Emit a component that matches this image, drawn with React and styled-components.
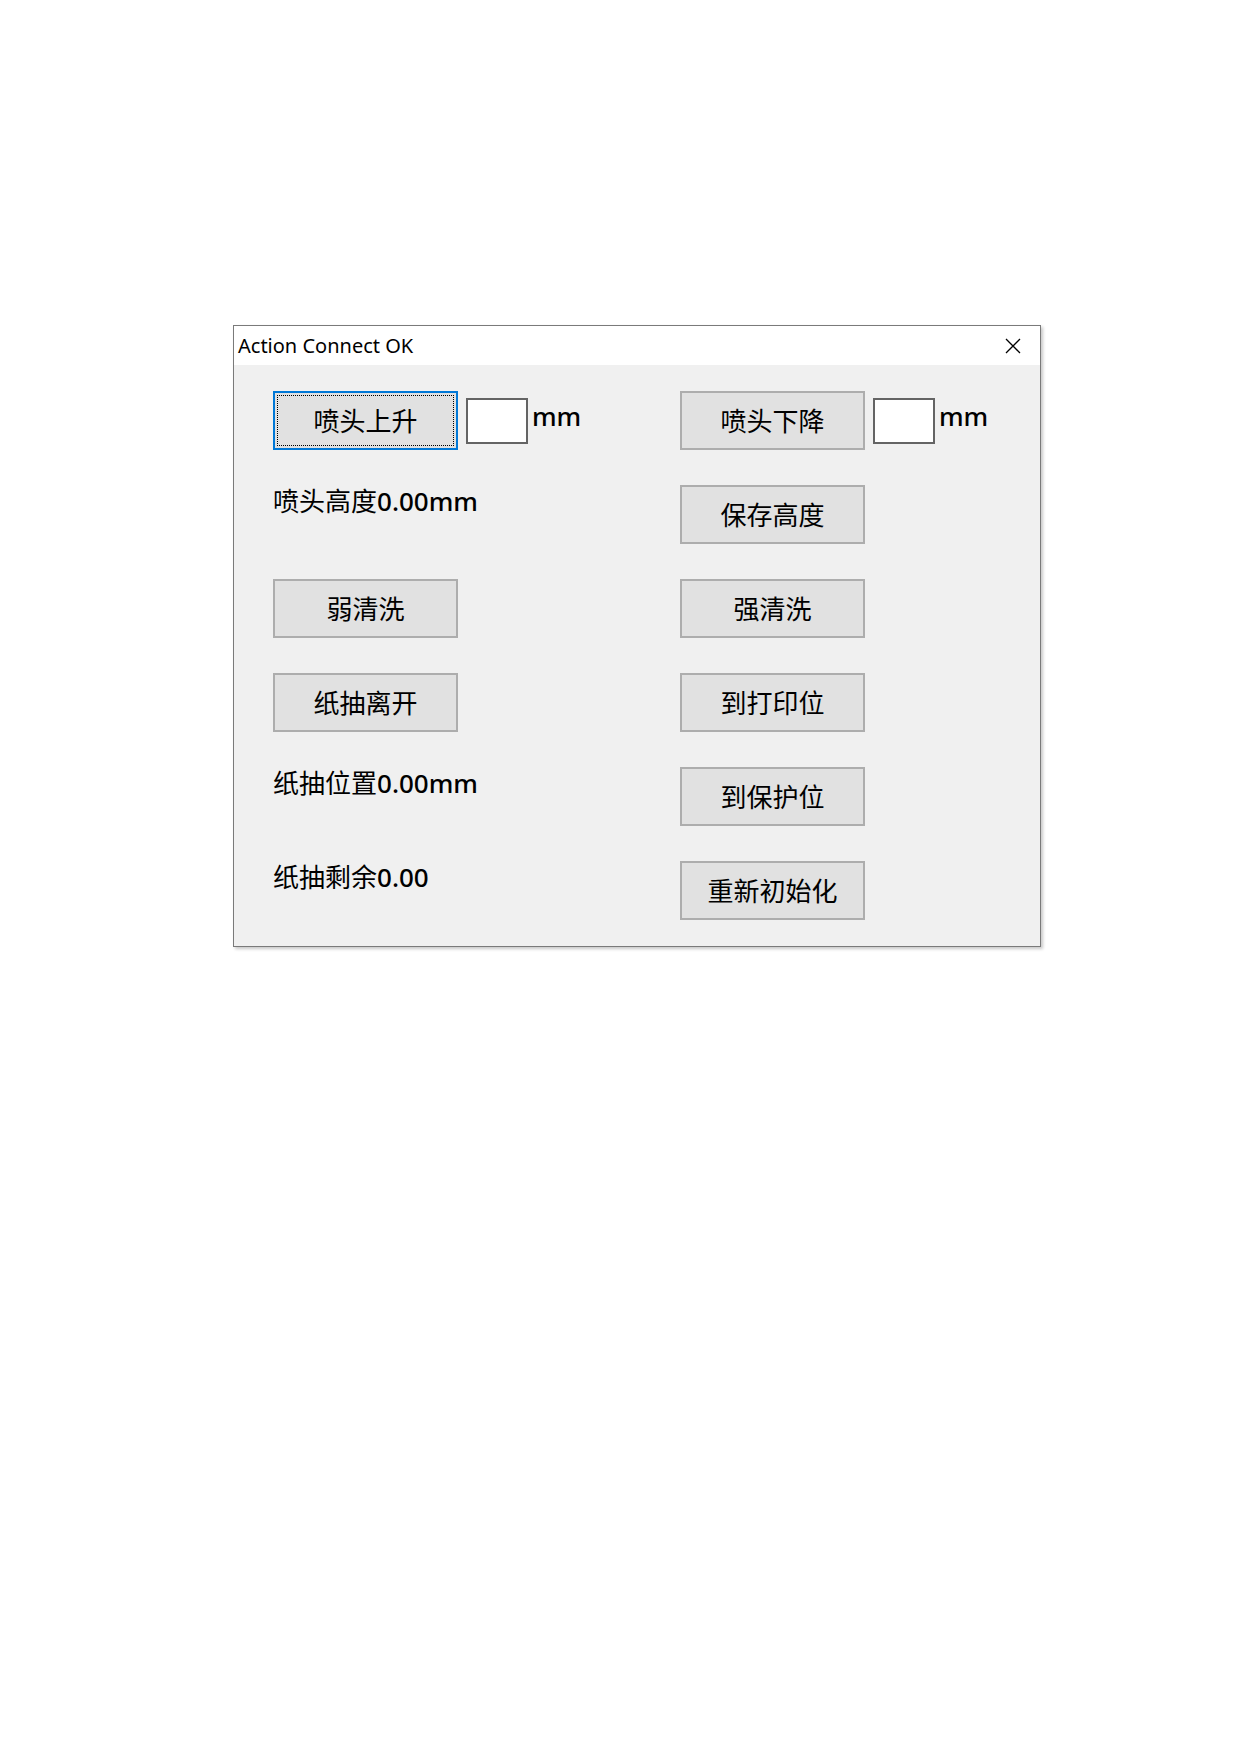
import React from "react";
import styled, { createGlobalStyle } from "styled-components";

const GlobalStyle = createGlobalStyle`
  html, body {
    margin: 0;
    padding: 0;
    background: #ffffff;
  }
  body {
    font-family: "Noto Sans", "Noto Sans CJK SC", sans-serif;
  }
`;

const Page = styled.div`
  width: 1240px;
  min-height: 1754px;
  padding: 325px 0 0 233px;
  box-sizing: border-box;
`;

const Window = styled.div`
  width: 808px;
  height: 622px;
  box-sizing: border-box;
  border: 1px solid #7a7a7a;
  background: #f0f0f0;
  box-shadow: 2px 2px 3px rgba(0, 0, 0, 0.22);
  display: flex;
  flex-direction: column;
`;

const TitleBar = styled.div`
  flex: 0 0 39px;
  background: #ffffff;
  display: flex;
  align-items: center;
  justify-content: space-between;
  padding: 0 19px 0 4px;
  font-family: "Noto Sans", sans-serif;
  font-size: 20px;
  color: #000;
`;

const Title = styled.span`
  line-height: 1;
  padding-top: 1px;
`;

const CloseIcon = () => (
  <svg width="16" height="16" viewBox="0 0 16 16">
    <path d="M1 1 L15 15 M15 1 L1 15" stroke="#000" strokeWidth="1.3" />
  </svg>
);

const Body = styled.div`
  flex: 1;
  display: grid;
  grid-template-columns: 407px 1fr;
  grid-template-rows: repeat(5, 94px) 59px;
  padding: 26px 0 0 39px;
  font-family: "Noto Sans", "Noto Sans CJK SC", sans-serif;
  font-size: 26px;
  color: #000;
`;

const Row = styled.div`
  display: flex;
  align-items: flex-start;
`;

const Button = styled.button`
  width: 185px;
  height: 59px;
  box-sizing: border-box;
  background: #e1e1e1;
  border: 2px solid ${(p) => (p.focused ? "#0078d7" : "#adadad")};
  font-family: inherit;
  font-size: 26px;
  color: #000;
  padding: 0;
  margin: 0;
  position: relative;
  display: flex;
  align-items: center;
  justify-content: center;
  line-height: 1;

  ${(p) =>
    p.focused &&
    `
    &::after {
      content: "";
      position: absolute;
      inset: 2px;
      border: 1px dotted #000;
    }
  `}
`;

const Input = styled.div`
  width: 62px;
  height: 46px;
  box-sizing: border-box;
  margin: 7px 0 0 8px;
  background: #ffffff;
  border: 2px solid #646464;
`;

const Unit = styled.span`
  margin: 12px 0 0 4px;
  line-height: 26px;
  font-weight: 500;
`;

const Label = styled.div`
  padding-top: 3px;
  line-height: 26px;
  white-space: nowrap;
`;

const Value = styled.span`
  font-weight: 500;
`;

export default function App() {
  return (
    <Page>
      <GlobalStyle />
      <Window>
        <TitleBar>
          <Title>Action Connect OK</Title>
          <CloseIcon />
        </TitleBar>
        <Body>
          <Row>
            <Button focused>喷头上升</Button>
            <Input />
            <Unit>mm</Unit>
          </Row>
          <Row>
            <Button>喷头下降</Button>
            <Input />
            <Unit>mm</Unit>
          </Row>

          <Label>
            喷头高度<Value>0.00mm</Value>
          </Label>
          <Row>
            <Button>保存高度</Button>
          </Row>

          <Row>
            <Button>弱清洗</Button>
          </Row>
          <Row>
            <Button>强清洗</Button>
          </Row>

          <Row>
            <Button>纸抽离开</Button>
          </Row>
          <Row>
            <Button>到打印位</Button>
          </Row>

          <Label>
            纸抽位置<Value>0.00mm</Value>
          </Label>
          <Row>
            <Button>到保护位</Button>
          </Row>

          <Label>
            纸抽剩余<Value>0.00</Value>
          </Label>
          <Row>
            <Button>重新初始化</Button>
          </Row>
        </Body>
      </Window>
    </Page>
  );
}
